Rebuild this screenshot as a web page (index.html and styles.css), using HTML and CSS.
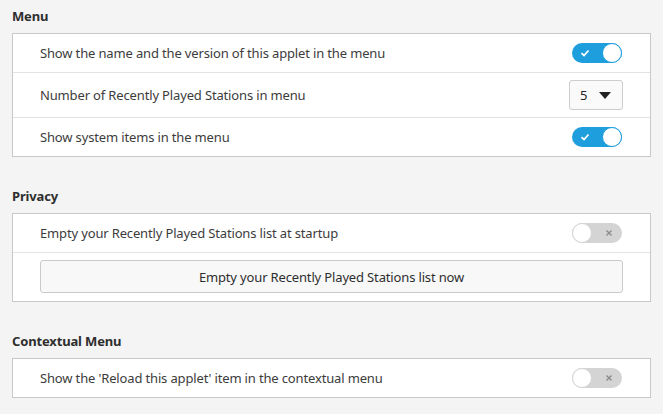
FILE: index.html
```html
<!DOCTYPE html>
<html>
<head>
<meta charset="utf-8">
<link rel="stylesheet" href="styles.css">
</head>
<body>
<div class="page">
  <section class="section">
    <h2 class="heading">Menu</h2>
    <div class="box">
      <div class="row">
        <span class="label">Show the name and the version of this applet in the menu</span>
        <span class="switch on"><span class="mark">
          <svg width="10" height="8" viewBox="0 0 10 8"><path d="M1.5 4.2 L4 6.5 L8.5 1.5" fill="none" stroke="#fff" stroke-width="1.8"/></svg>
        </span><span class="knob"></span></span>
      </div>
      <div class="row tall">
        <span class="label">Number of Recently Played Stations in menu</span>
        <span class="combo"><span class="combo-val">5</span>
          <svg width="12" height="7" viewBox="0 0 12 7"><path d="M0 0 H12 L6 7 Z" fill="#222"/></svg>
        </span>
      </div>
      <div class="row">
        <span class="label">Show system items in the menu</span>
        <span class="switch on"><span class="mark">
          <svg width="10" height="8" viewBox="0 0 10 8"><path d="M1.5 4.2 L4 6.5 L8.5 1.5" fill="none" stroke="#fff" stroke-width="1.8"/></svg>
        </span><span class="knob"></span></span>
      </div>
    </div>
  </section>
  <section class="section">
    <h2 class="heading">Privacy</h2>
    <div class="box">
      <div class="row">
        <span class="label">Empty your Recently Played Stations list at startup</span>
        <span class="switch off"><span class="knob"></span><span class="mark">
          <svg width="8" height="8" viewBox="0 0 8 8"><path d="M1.5 1.5 L6.5 6.5 M6.5 1.5 L1.5 6.5" fill="none" stroke="#8a8a8a" stroke-width="1.3"/></svg>
        </span></span>
      </div>
      <div class="row btn-row">
        <button class="button">Empty your Recently Played Stations list now</button>
      </div>
    </div>
  </section>
  <section class="section">
    <h2 class="heading">Contextual Menu</h2>
    <div class="box">
      <div class="row">
        <span class="label">Show the 'Reload this applet' item in the contextual menu</span>
        <span class="switch off"><span class="knob"></span><span class="mark">
          <svg width="8" height="8" viewBox="0 0 8 8"><path d="M1.5 1.5 L6.5 6.5 M6.5 1.5 L1.5 6.5" fill="none" stroke="#8a8a8a" stroke-width="1.3"/></svg>
        </span></span>
      </div>
    </div>
  </section>
</div>
</body>
</html>
```
FILE: styles.css
```css
* { box-sizing: border-box; }
html, body { margin: 0; padding: 0; }
body {
  background: #f4f4f4;
  font-family: "Noto Sans", "DejaVu Sans", sans-serif;
  font-size: 13px;
  letter-spacing: -0.15px;
  color: #3c3c3c;
  width: 663px;
  height: 414px;
  overflow: hidden;
}
.page {
  padding: 7px 12px 0 12px;
  display: flex;
  flex-direction: column;
  gap: 30px;
}
.section { display: flex; flex-direction: column; }
.heading {
  margin: 0 0 8px 0;
  font-size: 13px;
  font-weight: bold;
  line-height: 18px;
  color: #2e2e2e;
}
.box {
  background: #fff;
  border: 1px solid #c8c8c8;
  width: 639px;
}
.row {
  display: flex;
  align-items: center;
  justify-content: space-between;
  height: 39px;
  padding: 0 28px 0 27px;
  border-top: 1px solid #e2e2e2;
}
.row:first-child { border-top: none; height: 38px; }
.row.tall { height: 45px; padding-right: 27px; }
.row.btn-row { height: 49px; padding: 7px 27px 8px 27px; }
.label { white-space: nowrap; }
.switch {
  width: 50px;
  height: 20px;
  border-radius: 10px;
  display: flex;
  align-items: center;
  justify-content: space-between;
}
.switch.on { background: #1f9ede; }
.switch.off { background: #d4d4d4; }
.knob {
  width: 20px;
  height: 20px;
  border-radius: 50%;
  background: #fff;
}
.switch.on .knob { border: 1px solid #1f9ede; }
.switch.off .knob { border: 1px solid #d4d4d4; }
.mark {
  width: 26px;
  display: flex;
  align-items: center;
  justify-content: center;
}
.mark svg { display: block; }
.combo {
  width: 54px;
  height: 30px;
  background: #fafafa;
  border: 1px solid #cdcdcd;
  border-radius: 3px;
  display: flex;
  align-items: center;
  padding: 0 11px 0 10px;
  justify-content: space-between;
  color: #222;
}
.combo svg { display: block; }
.button {
  width: 100%;
  height: 33px;
  background: #f8f8f8;
  border: 1px solid #cacaca;
  border-radius: 3px;
  font-family: inherit;
  font-size: 13px;
  letter-spacing: -0.15px;
  color: #2e2e2e;
  padding: 0;
}
```
